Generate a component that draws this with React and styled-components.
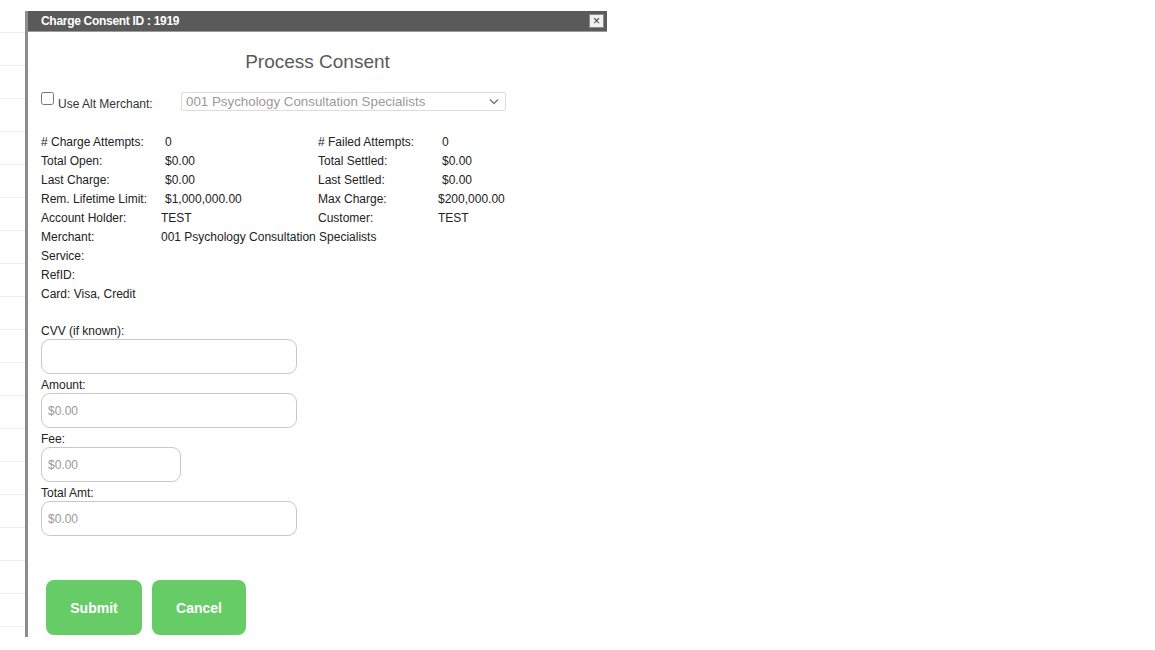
import React from 'react'
import styled, { createGlobalStyle } from 'styled-components'

const GlobalStyle = createGlobalStyle`
  html, body {
    margin: 0;
    padding: 0;
    background: #fff;
    font-family: "Liberation Sans", Arial, sans-serif;
  }
`

const Page = styled.div`
  display: flex;
  align-items: flex-start;
  width: 1155px;
  height: 650px;
  overflow: hidden;
`

const Backdrop = styled.div`
  width: 25px;
  height: 637px;
  background: repeating-linear-gradient(
    to bottom,
    transparent 0,
    transparent 32px,
    #eeeeee 32px,
    #eeeeee 33px
  );
`

const Dialog = styled.div`
  margin-top: 11px;
  width: 579px;
  height: 626px;
  border-left: 3px solid #8c8c8c;
  background: #fff;
  display: flex;
  flex-direction: column;
`

const TitleBar = styled.div`
  height: 20px;
  background: #5a5a5a;
  border-bottom: 1px solid #9a9a9a;
  display: flex;
  align-items: center;
  justify-content: space-between;
  padding: 0 3px 0 13px;
`

const TitleText = styled.span`
  color: #fff;
  font-weight: bold;
  font-size: 12px;
  letter-spacing: -0.3px;
`

const CloseButton = styled.button`
  width: 15px;
  height: 14px;
  padding: 0;
  margin: 0;
  border: 1px solid #8a8a8a;
  background: #f0f0f0;
  color: #333;
  font-size: 12px;
  line-height: 11px;
  font-family: "Liberation Sans", Arial, sans-serif;
  display: flex;
  align-items: center;
  justify-content: center;
`

const Body = styled.div`
  padding: 0 13px;
  display: flex;
  flex-direction: column;
  color: #222;
  font-size: 12px;
`

const Heading = styled.h2`
  margin: 19px 0 0;
  text-align: center;
  font-weight: normal;
  font-size: 19px;
  line-height: 22px;
  color: #5a5a5a;
`

const AltRow = styled.div`
  margin-top: 19px;
  display: flex;
  align-items: flex-start;
  height: 19px;
`

const CheckLabel = styled.label`
  display: flex;
  align-items: flex-start;
  width: 140px;
  color: #333;
  font-size: 12px;

  input {
    margin: 0 4px 0 0;
    width: 13px;
    height: 13px;
  }

  span {
    margin-top: 5px;
  }
`

const FakeSelect = styled.div`
  box-sizing: border-box;
  width: 325px;
  height: 19px;
  border: 1px solid #dcdcdc;
  border-radius: 2px;
  display: flex;
  align-items: center;
  justify-content: space-between;
  padding: 0 6px 0 4px;
  color: #9a9a9a;
  font-size: 13.33px;
`

const InfoGrid = styled.div`
  margin-top: 22px;
  display: grid;
  grid-template-columns: 124px 153px 124px 1fr;
  grid-auto-rows: 19px;
  align-items: center;
  line-height: 19px;
`

const Label = styled.span``

const Value = styled.span`
  margin-left: ${p => (p.$shift ? '-4px' : '0')};
  grid-column: ${p => (p.$span ? '2 / 5' : 'auto')};
`

const FieldBlock = styled.div`
  margin-top: ${p => p.$first ? '19px' : '3px'};
  display: flex;
  flex-direction: column;
`

const FieldLabel = styled.label`
  padding-top: 1px;
  font-size: 12px;
  line-height: 15px;
  color: #222;
`

const Input = styled.input`
  box-sizing: border-box;
  width: ${p => p.$w || 256}px;
  height: 35px;
  border: 1px solid #c8c8c8;
  border-radius: 9px;
  padding: 0 6px;
  font-family: "Liberation Sans", Arial, sans-serif;
  font-size: 12px;
  color: #333;
  outline: none;

  &::placeholder {
    color: #9a9a9a;
  }
`

const ButtonRow = styled.div`
  margin-top: 44px;
  padding-left: 5px;
  display: flex;
  gap: 10px;
`

const GreenButton = styled.button`
  width: ${p => p.$w}px;
  height: 55px;
  border: none;
  border-radius: 8px;
  background: #66cc66;
  color: #fff;
  font-family: "Liberation Sans", Arial, sans-serif;
  font-weight: bold;
  font-size: 14px;
`

const Chevron = () => (
  <svg width="10" height="7" viewBox="0 0 10 7">
    <path d="M1 1.5 L5 5.5 L9 1.5" fill="none" stroke="#777" strokeWidth="1.4" />
  </svg>
)

const pairs = [
  ['# Charge Attempts:', '0', false, '# Failed Attempts:', '0', false],
  ['Total Open:', '$0.00', false, 'Total Settled:', '$0.00', false],
  ['Last Charge:', '$0.00', false, 'Last Settled:', '$0.00', false],
  ['Rem. Lifetime Limit:', '$1,000,000.00', false, 'Max Charge:', '$200,000.00', true],
  ['Account Holder:', 'TEST', true, 'Customer:', 'TEST', true],
]

const singles = [
  ['Merchant:', '001 Psychology Consultation Specialists'],
  ['Service:', ''],
  ['RefID:', ''],
]

const fields = [
  { label: 'CVV (if known):', placeholder: '' },
  { label: 'Amount:', placeholder: '$0.00' },
  { label: 'Fee:', placeholder: '$0.00', w: 140 },
  { label: 'Total Amt:', placeholder: '$0.00' },
]

const App = () => {
  return (
    <>
      <GlobalStyle />
      <Page>
        <Backdrop />
        <Dialog>
          <TitleBar>
            <TitleText>Charge Consent ID : 1919</TitleText>
            <CloseButton>×</CloseButton>
          </TitleBar>
          <Body>
            <Heading>Process Consent</Heading>
            <AltRow>
              <CheckLabel>
                <input type="checkbox" />
                <span>Use Alt Merchant:</span>
              </CheckLabel>
              <FakeSelect>
                <span>001 Psychology Consultation Specialists</span>
                <Chevron />
              </FakeSelect>
            </AltRow>
            <InfoGrid>
              {pairs.map(([l1, v1, s1, l2, v2, s2]) => (
                <React.Fragment key={l1}>
                  <Label>{l1}</Label>
                  <Value $shift={s1}>{v1}</Value>
                  <Label>{l2}</Label>
                  <Value $shift={s2}>{v2}</Value>
                </React.Fragment>
              ))}
              {singles.map(([l, v], i) => (
                <React.Fragment key={l}>
                  <Label>{l}</Label>
                  <Value $span $shift={i === 0}>{v}</Value>
                </React.Fragment>
              ))}
              <Label>Card: Visa, Credit</Label>
            </InfoGrid>
            {fields.map((f, i) => (
              <FieldBlock key={f.label} $first={i === 0}>
                <FieldLabel>{f.label}</FieldLabel>
                <Input placeholder={f.placeholder} $w={f.w} />
              </FieldBlock>
            ))}
            <ButtonRow>
              <GreenButton $w={96}>Submit</GreenButton>
              <GreenButton $w={94}>Cancel</GreenButton>
            </ButtonRow>
          </Body>
        </Dialog>
      </Page>
    </>
  )
}

export default App
